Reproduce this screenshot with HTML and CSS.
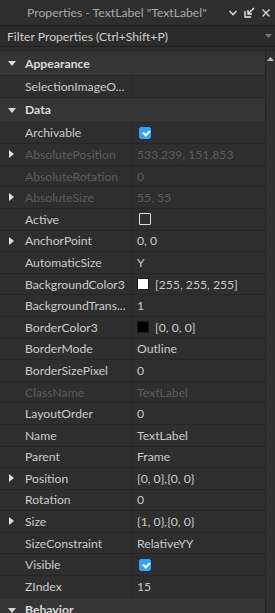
FILE: index.html
```html
<!DOCTYPE html>
<html lang="en">
<head>
    <meta charset="UTF-8">
    <meta name="viewport" content="width=device-width, initial-scale=1.0">
    <title>Properties</title>
    <link rel="stylesheet" href="styles.css">
</head>
<body>
    <div class="titlebar">
        <span class="title">Properties - TextLabel "TextLabel"</span>
        <div class="title-icons">
            <svg width="10" height="8" viewBox="0 0 10 8"><path d="M1.5 2 L5 5.5 L8.5 2" fill="none" stroke="#d6d6d6" stroke-width="1.6"/></svg>
            <svg width="11" height="11" viewBox="0 0 11 11"><path d="M1 4 V10 H7" fill="none" stroke="#e6e6e6" stroke-width="1.4"/><path d="M10 1 L4.5 6.5 M4 3 V7 H8" fill="none" stroke="#e6e6e6" stroke-width="1.4"/></svg>
            <svg width="10" height="10" viewBox="0 0 10 10"><path d="M1.5 1.5 L8.5 8.5 M8.5 1.5 L1.5 8.5" fill="none" stroke="#d6d6d6" stroke-width="1.4"/></svg>
        </div>
    </div>

    <div class="filter">
        <span>Filter Properties (Ctrl+Shift+P)</span>
        <svg class="filter-arrow" width="7" height="5" viewBox="0 0 7 5"><path d="M0 0 H7 L3.5 4 Z" fill="#777"/></svg>
    </div>

    <div class="panel">
        <div class="list">
            <div class="group"><span class="arrow down"></span>Appearance</div>
            <div class="row"><div class="name">SelectionImageO...</div><div class="value"></div></div>

            <div class="group"><span class="arrow down"></span>Data</div>
            <div class="row"><div class="name">Archivable</div><div class="value"><span class="check on"></span></div></div>
            <div class="row dim"><div class="name"><span class="arrow right"></span>AbsolutePosition</div><div class="value">533.239, 151.853</div></div>
            <div class="row dim"><div class="name">AbsoluteRotation</div><div class="value">0</div></div>
            <div class="row dim"><div class="name"><span class="arrow right"></span>AbsoluteSize</div><div class="value">55, 55</div></div>
            <div class="row"><div class="name">Active</div><div class="value"><span class="check"></span></div></div>
            <div class="row"><div class="name"><span class="arrow right"></span>AnchorPoint</div><div class="value">0, 0</div></div>
            <div class="row"><div class="name">AutomaticSize</div><div class="value">Y</div></div>
            <div class="row"><div class="name">BackgroundColor3</div><div class="value"><span class="swatch white"></span>[255, 255, 255]</div></div>
            <div class="row"><div class="name">BackgroundTrans...</div><div class="value">1</div></div>
            <div class="row"><div class="name">BorderColor3</div><div class="value"><span class="swatch black"></span>[0, 0, 0]</div></div>
            <div class="row"><div class="name">BorderMode</div><div class="value">Outline</div></div>
            <div class="row"><div class="name">BorderSizePixel</div><div class="value">0</div></div>
            <div class="row dim"><div class="name">ClassName</div><div class="value">TextLabel</div></div>
            <div class="row"><div class="name">LayoutOrder</div><div class="value">0</div></div>
            <div class="row"><div class="name">Name</div><div class="value">TextLabel</div></div>
            <div class="row"><div class="name">Parent</div><div class="value">Frame</div></div>
            <div class="row"><div class="name"><span class="arrow right"></span>Position</div><div class="value">{0, 0},{0, 0}</div></div>
            <div class="row"><div class="name">Rotation</div><div class="value">0</div></div>
            <div class="row"><div class="name"><span class="arrow right"></span>Size</div><div class="value">{1, 0},{0, 0}</div></div>
            <div class="row"><div class="name">SizeConstraint</div><div class="value">RelativeYY</div></div>
            <div class="row"><div class="name">Visible</div><div class="value"><span class="check on"></span></div></div>
            <div class="row"><div class="name">ZIndex</div><div class="value">15</div></div>

            <div class="group"><span class="arrow down"></span>Behavior</div>
        </div>
        <div class="scrollbar">
            <svg width="7" height="5" viewBox="0 0 7 5"><path d="M0 4 H7 L3.5 0 Z" fill="#bbb"/></svg>
        </div>
    </div>
</body>
</html>
```

FILE: styles.css
```css
* {
    box-sizing: border-box;
}

body {
    margin: 0;
    width: 275px;
    height: 613px;
    overflow: hidden;
    background-color: #2e2e2e;
    font-family: Lato, "Open Sans", sans-serif;
    font-size: 12.2px;
    color: #cccccc;
}

.titlebar {
    height: 26px;
    display: flex;
    align-items: center;
    padding-left: 27px;
    padding-right: 4px;
    background-color: #2e2e2e;
    border-bottom: 1px solid #1f1f1f;
}

.title {
    flex: 1;
    color: #a8a8a8;
    font-size: 12.2px;
    white-space: nowrap;
}

.title-icons {
    display: flex;
    align-items: center;
    gap: 6px;
}

.filter {
    height: 21px;
    display: flex;
    align-items: center;
    justify-content: space-between;
    padding: 0 3px 0 7px;
    background-color: #2c2c2c;
    border-bottom: 1px solid #1f1f1f;
    color: #cfcfcf;
}

.panel {
    display: flex;
    margin-top: 3px;
    border-top: 1px solid #232323;
}

.list {
    flex: 1;
}

.scrollbar {
    width: 10px;
    height: 570px;
    background-color: #303030;
    border-left: 1px solid #242424;
    display: flex;
    justify-content: center;
    padding-top: 6px;
}

.group {
    height: 25px;
    display: flex;
    align-items: center;
    padding-left: 25px;
    position: relative;
    background-color: #353535;
    border-bottom: 1px solid #262626;
    font-weight: bold;
    color: #dcdcdc;
}

.row {
    height: 21.6px;
    display: grid;
    grid-template-columns: 133px 1fr;
    border-bottom: 1px solid #262626;
}

.name {
    position: relative;
    display: flex;
    align-items: center;
    padding-left: 25px;
    border-right: 1px solid #262626;
    white-space: nowrap;
    overflow: hidden;
}

.value {
    display: flex;
    align-items: center;
    padding-left: 4px;
    white-space: nowrap;
}

.dim {
    color: #5e5e5e;
}

.arrow {
    position: absolute;
    width: 0;
    height: 0;
}

.arrow.down {
    left: 8px;
    top: 10px;
    border-left: 4px solid transparent;
    border-right: 4px solid transparent;
    border-top: 5px solid #d8d8d8;
}

.arrow.right {
    left: 9px;
    top: 6px;
    border-top: 4px solid transparent;
    border-bottom: 4px solid transparent;
    border-left: 5px solid #e0e0e0;
}

.check {
    width: 12px;
    height: 12px;
    margin-left: 2px;
    border: 1px solid #e0e0e0;
    border-radius: 1px;
    position: relative;
}

.check.on {
    background-color: #35a2f4;
    border-color: #35a2f4;
    border-radius: 2px;
}

.check.on::after {
    content: "";
    position: absolute;
    left: 2.5px;
    top: 2px;
    width: 5px;
    height: 3px;
    border-left: 2px solid #ffffff;
    border-bottom: 2px solid #ffffff;
    transform: rotate(-45deg);
}

.swatch {
    width: 12px;
    height: 12px;
    margin-right: 6px;
    border: 1px solid #1a1a1a;
}

.swatch.white {
    background-color: #ffffff;
}

.swatch.black {
    background-color: #000000;
}
```
